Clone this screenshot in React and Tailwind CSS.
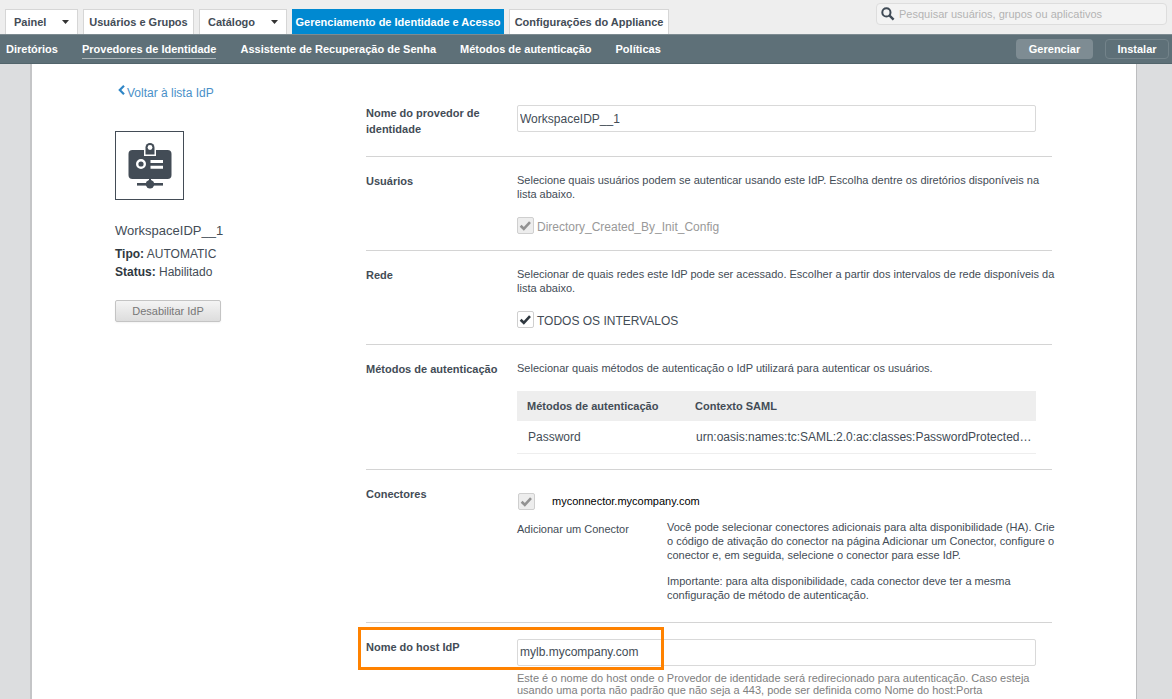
import React from 'react';
import clsx from 'clsx';

const tabs = [
  { label: 'Painel', menu: true, width: 'w-[73px]' },
  { label: 'Usuários e Grupos', width: 'w-[111px]' },
  { label: 'Catálogo', menu: true, width: 'w-[88px]' },
  { label: 'Gerenciamento de Identidade e Acesso', active: true, width: 'w-[212px]' },
  { label: 'Configurações do Appliance', width: 'w-[160px]' },
];

const subLinks = [
  { label: 'Diretórios' },
  { label: 'Provedores de Identidade', active: true },
  { label: 'Assistente de Recuperação de Senha' },
  { label: 'Métodos de autenticação' },
  { label: 'Políticas' },
];

const SearchIcon = () => (
  <svg viewBox="0 0 14 14" className="w-3.5 h-3.5 shrink-0" fill="none" stroke="#3f4a55" aria-hidden="true">
    <circle cx="5.4" cy="5.4" r="4.1" strokeWidth="2" />
    <path d="M8.6 8.6 L12.6 12.6" strokeWidth="2.4" />
  </svg>
);

const BadgeIcon = () => (
  <svg viewBox="0 0 44 46" className="w-11 h-[46px]" aria-hidden="true">
    <rect x="0.5" y="7" width="43" height="29" rx="4" fill="#434c56" />
    <path d="M16 13 V5 A6 6 0 0 1 28 5 V13 Z" fill="#fff" />
    <path d="M17.5 11.5 V4.5 A4.5 4.5 0 0 1 26.5 4.5 V11.5 Z" fill="#434c56" />
    <circle cx="22" cy="4.5" r="2.4" fill="#fff" />
    <circle cx="13" cy="21" r="3.8" fill="none" stroke="#fff" strokeWidth="2.4" />
    <path d="M22.5 18.5 H35 M22.5 24.2 H35" stroke="#fff" strokeWidth="3" />
    <path d="M22 36 V42" stroke="#434c56" strokeWidth="2" />
    <path d="M9 41.3 H35" stroke="#434c56" strokeWidth="2.6" />
    <circle cx="22" cy="41.3" r="4.2" fill="#434c56" />
  </svg>
);

const CheckBox = ({ id, disabled }) => (
  <span className="relative block w-[17px] h-[17px] shrink-0">
    <input
      id={id}
      type="checkbox"
      defaultChecked
      disabled={disabled}
      className="peer block appearance-none w-full h-full border border-[#cfcfcf] rounded-xs bg-white disabled:bg-[#ededed]"
    />
    <svg
      viewBox="0 0 17 17"
      className="absolute inset-0 hidden peer-checked:block pointer-events-none text-[#2f3840] peer-disabled:text-[#929292]"
      fill="none"
      stroke="currentColor"
      strokeWidth="2.6"
      aria-hidden="true"
    >
      <path d="M3.6 8.8 L6.8 11.8 L13 5.2" />
    </svg>
  </span>
);

const Row = ({ label, htmlFor, last, children }) => (
  <section
    className={clsx(
      'relative grid grid-cols-[151px_minmax(0,1fr)] pt-4',
      !last && 'border-b border-[#d4d4d4]'
    )}
  >
    {htmlFor ? (
      <label htmlFor={htmlFor} className="text-[11px] leading-4 font-bold pr-4">{label}</label>
    ) : (
      <h2 className="text-[11px] leading-4 font-bold">{label}</h2>
    )}
    {children}
  </section>
);

const inputClass =
  'block w-full h-[27px] px-0.5 border border-[#d9d9d9] rounded-xs bg-white text-[12px] text-[#434c56] outline-none';

export default function App() {
  return (
    <div className="min-h-screen flex flex-col bg-[#dcdddf] font-['Liberation_Sans',Arial,sans-serif] text-[11px] text-[#434c56]">
      <header className="flex items-end justify-between h-[34px] px-[5px] bg-[#eeeeee]">
        <nav className="flex gap-[5px]">
          {tabs.map((tab) => (
            <button
              key={tab.label}
              type="button"
              className={clsx(
                'flex items-center h-[25px] px-2 font-bold border border-b-0 whitespace-nowrap',
                tab.width,
                tab.menu ? 'justify-between' : 'justify-center',
                tab.active ? 'bg-[#0089d1] border-[#0089d1] text-white' : 'bg-white border-[#d6d6d6] text-[#434c56]'
              )}
            >
              {tab.label}
              {tab.menu && (
                <svg viewBox="0 0 7 4" className="w-[7px] h-1" fill="#333" aria-hidden="true">
                  <path d="M0 0 H7 L3.5 4 Z" />
                </svg>
              )}
            </button>
          ))}
        </nav>
        <label className="flex items-center gap-1 self-start mt-[3px] h-[22px] w-[291px] px-1 border border-[#dddddd] rounded bg-[#f3f3f3]">
          <SearchIcon />
          <input
            type="search"
            aria-label="Pesquisar"
            placeholder="Pesquisar usuários, grupos ou aplicativos"
            className="flex-1 min-w-0 bg-transparent outline-none text-[11px] placeholder:text-[#b3b3b3]"
          />
        </label>
      </header>

      <div className="flex items-center justify-between h-[30px] pl-1.5 pr-[3px] bg-[#5e7078] border-y border-t-[#7d8b91] border-b-[#52646b] text-white">
        <nav className="flex gap-6">
          {subLinks.map((link) => (
            <a
              key={link.label}
              href="#"
              className={clsx(
                'h-[19px] leading-[18px] font-bold border-b whitespace-nowrap',
                link.active ? 'border-[#aab4b8]' : 'border-transparent'
              )}
            >
              {link.label}
            </a>
          ))}
        </nav>
        <div className="flex gap-3">
          <button type="button" className="h-5 w-[77px] font-bold rounded bg-[#7e8c93]">Gerenciar</button>
          <button type="button" className="h-5 w-[64px] font-bold rounded border border-[#73838a]">Instalar</button>
        </div>
      </div>

      <main className="flex flex-1 ml-[30px] mr-[35px] pl-[83px] pr-[84px] bg-white border-l-2 border-r border-l-[#c4c5c7] border-r-[#bcbdbf]">
        <aside className="w-[251px] shrink-0 pt-[21px]">
          <a href="#" className="flex items-center gap-0.5 pl-[3px] h-4 text-[12px] text-[#4a90c8]">
            <svg viewBox="0 0 7 10" className="w-[7px] h-2.5 mb-1.5" fill="none" stroke="#2f86c6" strokeWidth="2.2" aria-hidden="true">
              <path d="M6 0.8 L1.8 5 L6 9.2" />
            </svg>
            Voltar à lista IdP
          </a>
          <div className="flex items-center justify-center w-[69px] h-[69px] mt-[30px] border border-[#434c56]">
            <BadgeIcon />
          </div>
          <h1 className="mt-[23px] text-[13px] leading-4">WorkspaceIDP__1</h1>
          <p className="mt-1.5 text-[12px] leading-[18px]">
            <b className="text-[#2f3840]">Tipo:</b> AUTOMATIC
          </p>
          <p className="text-[12px] leading-[18px]">
            <b className="text-[#2f3840]">Status:</b> Habilitado
          </p>
          <button
            type="button"
            className="mt-[19px] w-[106px] h-[22px] border border-[#c4c4c4] rounded-xs bg-linear-to-b from-[#f4f4f4] to-[#dddddd] text-[11px] text-[#777777] shadow-xs"
          >
            Desabilitar IdP
          </button>
        </aside>

        <form className="flex-1 min-w-0 pt-[25px]">
          <Row label="Nome do provedor de identidade" htmlFor="idp-name">
            <div className="pr-4 pb-6">
              <input id="idp-name" type="text" defaultValue="WorkspaceIDP__1" className={inputClass} />
            </div>
          </Row>

          <Row label="Usuários">
            <div className="pb-4">
              <p className="leading-[14px] -mr-2">
                Selecione quais usuários podem se autenticar usando este IdP. Escolha dentre os diretórios disponíveis na lista abaixo.
              </p>
              <div className="flex gap-[3px] mt-4">
                <CheckBox id="directory" disabled />
                <label htmlFor="directory" className="text-[12px] leading-5 h-[17px] text-[#999999]">Directory_Created_By_Init_Config</label>
              </div>
            </div>
          </Row>

          <Row label="Rede">
            <div className="pb-4">
              <p className="leading-[14px] -mr-2">
                Selecionar de quais redes este IdP pode ser acessado. Escolher a partir dos intervalos de rede disponíveis da lista abaixo.
              </p>
              <div className="flex gap-[3px] mt-4">
                <CheckBox id="ranges" />
                <label htmlFor="ranges" className="text-[12px] leading-5 h-[17px]">TODOS OS INTERVALOS</label>
              </div>
            </div>
          </Row>

          <Row label="Métodos de autenticação">
            <div className="pb-[15px]">
              <p className="leading-[14px]">
                Selecionar quais métodos de autenticação o IdP utilizará para autenticar os usuários.
              </p>
              <div className="pr-4 mt-4">
                <table className="w-full table-fixed text-left">
                  <thead className="bg-[#eeeeee]">
                    <tr className="h-[30px]">
                      <th className="w-[168px] pl-2.5">Métodos de autenticação</th>
                      <th className="pl-2.5">Contexto SAML</th>
                    </tr>
                  </thead>
                  <tbody>
                    <tr className="h-8 border-b border-[#eeeeee] text-[12px]">
                      <td className="pl-[11px]">Password</td>
                      <td className="pl-[11px] pr-1 truncate">urn:oasis:names:tc:SAML:2.0:ac:classes:PasswordProtected…</td>
                    </tr>
                  </tbody>
                </table>
              </div>
            </div>
          </Row>

          <Row label="Conectores">
            <div className="pt-2 pb-5">
              <div className="flex items-center gap-[17px] h-4 pl-px">
                <CheckBox id="connector" disabled />
                <label htmlFor="connector" className="text-black">myconnector.mycompany.com</label>
              </div>
              <div className="flex mt-2.5 -mr-2">
                <a href="#" className="w-[150px] shrink-0 leading-[18px]">Adicionar um Conector</a>
                <div className="leading-[14px]">
                  <p>
                    Você pode selecionar conectores adicionais para alta disponibilidade (HA). Crie o código de ativação do conector na página Adicionar um Conector, configure o conector e, em seguida, selecione o conector para esse IdP.
                  </p>
                  <p className="mt-3">
                    Importante: para alta disponibilidade, cada conector deve ter a mesma configuração de método de autenticação.
                  </p>
                </div>
              </div>
            </div>
          </Row>

          <Row label="Nome do host IdP" htmlFor="idp-host" last>
            <div className="pr-4">
              <input id="idp-host" type="text" defaultValue="mylb.mycompany.com" className={inputClass} />
              <p className="mt-1.5 leading-3 text-[#808080]">
                Este é o nome do host onde o Provedor de identidade será redirecionado para autenticação. Caso esteja usando uma porta não padrão que não seja a 443, pode ser definida como Nome do host:Porta
              </p>
            </div>
            {/* highlight around the host name field */}
            <div className="absolute -left-2 top-1 w-[306px] h-[43px] border-3 border-[#ff8200] pointer-events-none"></div>
          </Row>
        </form>
      </main>
    </div>
  );
}
